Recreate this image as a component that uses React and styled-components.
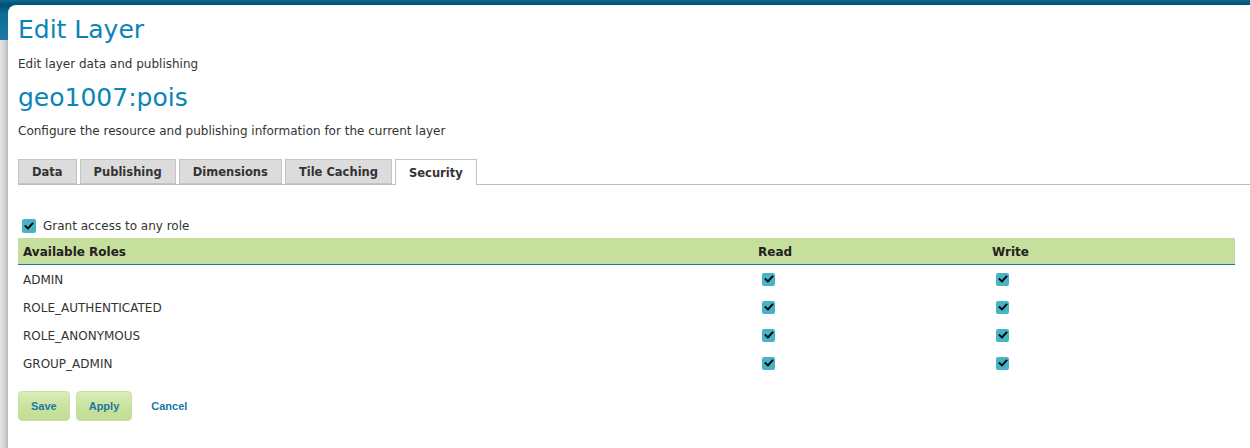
import React from "react";
import styled, { createGlobalStyle } from "styled-components";

const Global = createGlobalStyle`
  html, body { margin: 0; padding: 0; background: #fff; }
  body { font-family: "DejaVu Sans", sans-serif; color: #333; }
`;

const Page = styled.div`
  height: 448px;
  overflow: hidden;
  box-sizing: border-box;
  padding: 5px 0 0 8px;
  background:
    linear-gradient(to bottom, #0b6b91 0, #00506e 5px, #0d6c96 14px, #1a7aa6 40px, transparent 40px),
    linear-gradient(to right, #e6e6e6 0, #d2d2d2 5px, #b8b8b8 8px);
`;

const Panel = styled.div`
  background: #fff;
  border-top-left-radius: 8px;
  height: 100%;
  padding: 10px 0 0 10px;
  box-sizing: border-box;
`;

const Title = styled.h1`
  margin: ${(p) => p.$mt || 0}px 0 0;
  font-size: 25px;
  font-weight: normal;
  color: #0b84b7;
  line-height: 29px;
`;

const Sub = styled.p`
  margin: ${(p) => p.$mt || 0}px 0 0;
  font-size: 12px;
  line-height: 14px;
  color: #333;
`;

const TabBar = styled.div`
  display: flex;
  gap: 3px;
  margin-top: 21px;
  border-bottom: 1px solid #bdbdbd;
  height: 25px;
`;

const Tab = styled.div`
  box-sizing: border-box;
  height: ${(p) => (p.$active ? "26px" : "25px")};
  padding: 0 13px;
  display: flex;
  align-items: center;
  font-size: 11.5px;
  font-weight: bold;
  color: #333;
  background: ${(p) => (p.$active ? "#fff" : "#dcdcdc")};
  border: 1px solid #c4c4c4;
  border-bottom: ${(p) => (p.$active ? "none" : "1px solid #c4c4c4")};
`;

const GrantRow = styled.label`
  display: flex;
  align-items: center;
  gap: 7px;
  margin: 34px 0 0 4px;
  height: 14px;
  font-size: 12px;
  color: #333;
`;

const Box = styled.span`
  display: inline-flex;
  align-items: center;
  justify-content: center;
  width: ${(p) => p.$size || 13}px;
  height: ${(p) => p.$size || 13}px;
  border-radius: 2px;
  background: #46b4c5;
  flex: none;
`;

const Table = styled.div`
  margin: 5px 15px 0 0;
`;

const HeadRow = styled.div`
  display: grid;
  grid-template-columns: 735px 234px 1fr;
  height: 26px;
  align-items: center;
  background: #c6df9c;
  border-bottom: 1px solid #137a98;
  font-size: 12px;
  font-weight: bold;
  color: #222;
`;

const Row = styled.div`
  display: grid;
  grid-template-columns: 735px 234px 1fr;
  height: 28px;
  align-items: center;
  font-size: 12px;
  color: #333;
`;

const Cell = styled.div`
  padding-left: ${(p) => (p.$check ? 9 : 5)}px;
  padding-top: ${(p) => (p.$check ? 0 : 1)}px;
  display: flex;
  align-items: center;
`;

const Actions = styled.div`
  display: flex;
  align-items: center;
  gap: 6px;
  margin-top: 14px;
`;

const Button = styled.button`
  box-sizing: border-box;
  height: 30px;
  padding: 0 12px;
  border: 1px solid #c8e2a4;
  border-radius: 4px;
  background: linear-gradient(to bottom, #d9edb6 0%, #c8e19c 60%, #c2dd94 100%);
  font-family: "Liberation Sans", Arial, sans-serif;
  font-weight: bold;
  font-size: 11px;
  color: #1b78a3;
  cursor: pointer;
`;

const CancelLink = styled.a`
  margin-left: 13px;
  font-family: "Liberation Sans", Arial, sans-serif;
  font-weight: bold;
  font-size: 11px;
  color: #1b78a3;
  text-decoration: none;
`;

function Check({ size }) {
  return (
    <Box $size={size}>
      <svg width="10" height="10" viewBox="0 0 10 10">
        <path d="M1.6 5.2 L4 7.4 L8.4 2.6" fill="none" stroke="#000" strokeWidth="1.9" strokeLinecap="square" />
      </svg>
    </Box>
  );
}

const roles = ["ADMIN", "ROLE_AUTHENTICATED", "ROLE_ANONYMOUS", "GROUP_ADMIN"];
const tabs = ["Data", "Publishing", "Dimensions", "Tile Caching", "Security"];

export default function App() {
  return (
    <>
      <Global />
      <Page>
        <Panel>
          <Title>Edit Layer</Title>
          <Sub $mt={13}>Edit layer data and publishing</Sub>
          <Title $mt={12}>geo1007:pois</Title>
          <Sub $mt={12}>Configure the resource and publishing information for the current layer</Sub>
          <TabBar>
            {tabs.map((t) => (
              <Tab key={t} $active={t === "Security"}>{t}</Tab>
            ))}
          </TabBar>
          <GrantRow>
            <Check size={14} />
            Grant access to any role
          </GrantRow>
          <Table>
            <HeadRow>
              <Cell>Available Roles</Cell>
              <Cell>Read</Cell>
              <Cell>Write</Cell>
            </HeadRow>
            {roles.map((r) => (
              <Row key={r}>
                <Cell>{r}</Cell>
                <Cell $check><Check /></Cell>
                <Cell $check><Check /></Cell>
              </Row>
            ))}
          </Table>
          <Actions>
            <Button>Save</Button>
            <Button>Apply</Button>
            <CancelLink href="#">Cancel</CancelLink>
          </Actions>
        </Panel>
      </Page>
    </>
  );
}
